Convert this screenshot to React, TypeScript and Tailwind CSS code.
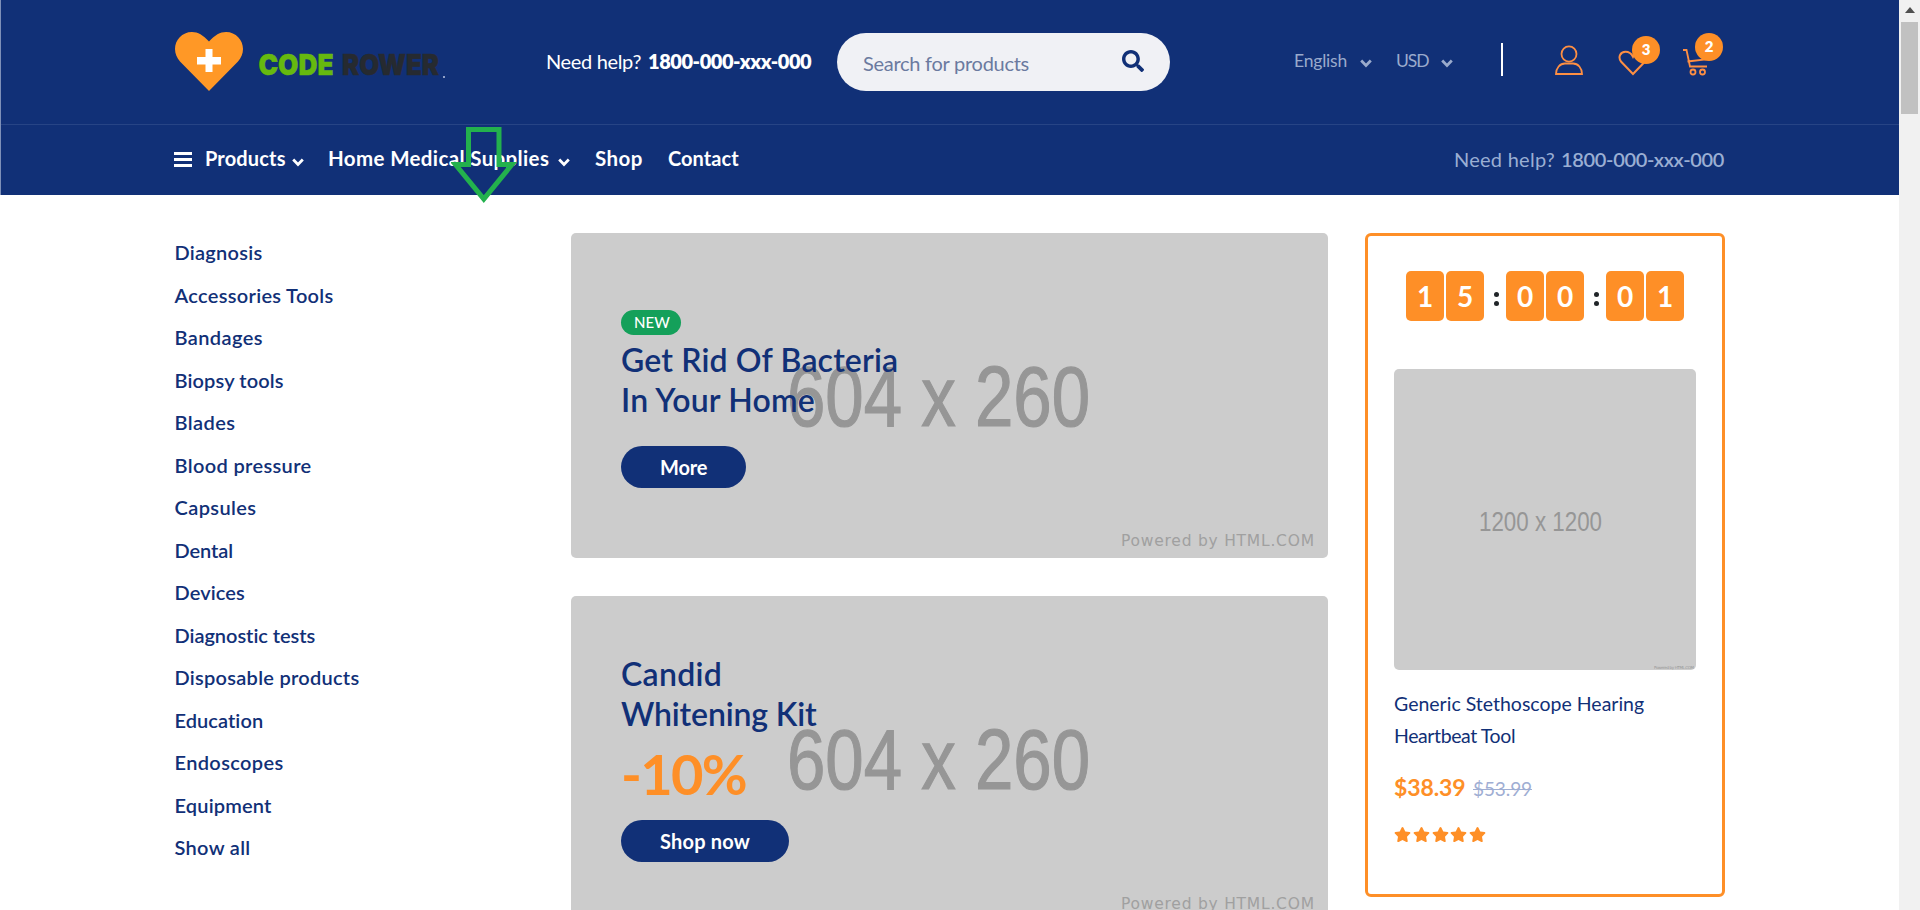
import React from "react";
import { FaSearch, FaStar } from "react-icons/fa";

const CATEGORIES: [string, string][] = [
  ["Diagnosis", "tracking-[0.27px]"],
  ["Accessories Tools", "tracking-[0.31px]"],
  ["Bandages", "tracking-[0.4px]"],
  ["Biopsy tools", "tracking-[0.12px]"],
  ["Blades", "tracking-[0.4px]"],
  ["Blood pressure", "tracking-[0.35px]"],
  ["Capsules", "tracking-[0.4px]"],
  ["Dental", "tracking-[-0.1px]"],
  ["Devices", "tracking-[0.1px]"],
  ["Diagnostic tests", "tracking-[-0.04px]"],
  ["Disposable products", "tracking-[0.27px]"],
  ["Education", "tracking-[0.07px]"],
  ["Endoscopes", "tracking-[0.36px]"],
  ["Equipment", "tracking-[0.17px]"],
  ["Show all", "tracking-[0.32px]"],
];

function Chevron({ className }: { className: string }) {
  return (
    <svg viewBox="0 0 12 9" className={className} fill="none" stroke="currentColor" strokeWidth="2.8">
      <path d="M1.2 1.6 6 6.4l4.8-4.8" />
    </svg>
  );
}

function Logo() {
  return (
    <svg width="275" height="64" viewBox="0 0 275 64" className="mt-[30px] shrink-0">
      <path fill="#ff9826" d="M34 11.5C40 5 45 2 51 2c10 0 17 8 17 17 0 5-2 9-5 12.500L34 61 5 31.500C2 28 0 24 0 19 0 10 7 2 17 2c6 0 11 3 17 9.500z" />
      <path fill="#fff" d="M30.500 19h7v8H46v7.500h-8.500V42h-7v-7.500H22V27h8.500z" />
      <text x="83.500" y="45" fontFamily="Inter" fontWeight="900" fontSize="29" fill="#66b90f" stroke="#66b90f" strokeWidth="0.5" textLength="75" lengthAdjust="spacingAndGlyphs">CODE</text>
      <text x="167" y="45" fontFamily="Inter" fontWeight="900" fontSize="29" fill="#262a30" stroke="#262a30" strokeWidth="0.5" textLength="97" lengthAdjust="spacingAndGlyphs">ROWER</text>
      <path fill="#8fa0c8" d="M268 46h2v2h-2z" />
    </svg>
  );
}

function BannerArt() {
  return (
    <svg viewBox="0 0 757 326" className="col-start-1 row-start-1 h-[326px] w-[757px]">
      <text x="216" y="193" fontFamily="Liberation Sans" fontSize="84.500" fill="#969696" stroke="#969696" strokeWidth="1.2" textLength="303" lengthAdjust="spacingAndGlyphs">604 x 260</text>
      <text x="550" y="312.500" fontFamily="DejaVu Sans" fontSize="15.5" fill="#a0a0a0" textLength="193">Powered by HTML.COM</text>
    </svg>
  );
}

function Digit({ value }: { value: string }) {
  return <span className="h-[50px] w-[38px] rounded-[5px] bg-[#fe8f27] text-center text-[28px] font-bold leading-[50px] text-white">{value}</span>;
}

function Colon() {
  return (
    <span className="flex h-[50px] w-[22px] flex-col items-center gap-1 pl-[2px] pt-[21px]">
      <i className="size-[5px] rounded-full bg-[#212529]" />
      <i className="size-[5px] rounded-full bg-[#212529]" />
    </span>
  );
}

export default function App() {
  return (
    <div className="flex h-[910px] w-[1920px] overflow-hidden bg-white font-[Lato,sans-serif] text-[#113077]">
      <div className="relative w-[1899px]">
        <header className="h-[195px] border-l border-[#7e90b8] bg-[#113077] text-white">
          <div className="flex h-[125px] items-start border-b border-[#274485] pl-[174px]">
            <Logo />
            <p className="mt-[46px] flex w-[290px] whitespace-nowrap pl-[96px] text-[20px] leading-[30px]">
              <span className="w-[102px] shrink-0 tracking-[-0.34px]">Need help?</span>
              <b className="shrink-0 font-extrabold tracking-[-0.45px]">1800-000-xxx-000</b>
            </p>
            <div className="ml-[97px] mt-[33px] flex h-[58px] w-[333px] items-start rounded-full bg-[#f0f1f5] pl-[26px]">
              <span className="mt-[15px] w-[259px] text-[20px] leading-[30px] tracking-[-0.27px] text-[#6b7a9f]">Search for products</span>
              <FaSearch className="mt-[17px] size-[22px] text-[#113077]" />
            </div>
            <div className="ml-[124px] mt-[46px] flex items-start text-[17.500px] leading-[30px] text-[#9aaacc]">
              <span className="w-[66px] tracking-[-0.2px]">English</span>
              <Chevron className="mt-[13px] h-[9px] w-[12px]" />
              <span className="ml-[24px] w-[45px] tracking-[-1px]">USD</span>
              <Chevron className="mt-[13px] h-[9px] w-[12px]" />
            </div>
            <div className="ml-[48px] mt-[43px] h-[33px] w-[2px] bg-white" />
            <svg viewBox="0 0 28 31" className="ml-[52px] mt-[45px] h-[31px] w-[28px]" fill="none" stroke="#fe8f43" strokeWidth="1.8">
              <ellipse cx="14" cy="9" rx="7.500" ry="7.600" />
              <path d="M1 29c0-6 4-10.500 9-10.500h8c5 0 9 4.500 9 10.500z" />
            </svg>
            <div className="relative ml-[35px] mt-[48px] h-[28px] w-[30px]">
              <svg viewBox="0 0 30 28" className="h-[28px] w-[30px]" fill="none" stroke="#fe8f43" strokeWidth="2">
                <path d="M15 26 3.200 13.800C-.5 9 2.500 3.800 7.500 3.800c3.500 0 6 2 7.500 5 1.500-3 4-5 7.500-5 5 0 8 5.200 4.300 10z" />
              </svg>
              <span className="absolute -top-[12px] left-[14px] size-[28px] rounded-full bg-[#fe8f27] text-center text-[15px] font-extrabold leading-[27px]">3</span>
            </div>
            <div className="relative ml-[35px] mt-[48px] h-[28px] w-[30px]">
              <svg viewBox="0 0 30 28" className="h-[28px] w-[30px]" fill="none" stroke="#fe8f43" strokeWidth="1.8">
                <path d="M0 2h3.500l3.500 16.500h17M4.500 13.500l18-2 2-8" />
                <circle cx="10" cy="24" r="2.500" /><circle cx="19.500" cy="24" r="2.500" />
              </svg>
              <span className="absolute -top-[15px] left-[12px] size-[28px] rounded-full bg-[#fe8f27] text-center text-[15px] font-extrabold leading-[27px]">2</span>
            </div>
          </div>
          <nav className="flex items-start whitespace-nowrap pl-[173px] pt-[18px] text-[20px] font-bold leading-[30px]">
            <svg viewBox="0 0 18 15" className="mt-[9px] h-[15px] w-[18px]" fill="currentColor"><path d="M0 0h18v3H0zM0 6h18v3H0zM0 12h18v3H0z" /></svg>
            <span className="ml-[13px] w-[87px] tracking-[0.15px]">Products</span>
            <Chevron className="mt-[15px] h-[9px] w-[12px]" />
            <span className="ml-[24px] w-[230px] text-[20.500px] tracking-[0.36px]">Home Medical Supplies</span>
            <Chevron className="mt-[15px] h-[9px] w-[12px]" />
            <span className="ml-[25px] w-[73px] text-[20.500px] tracking-[0.4px]">Shop</span>
            <span className="w-[71px] tracking-[0.05px]">Contact</span>
            <p className="ml-[715px] flex pt-px font-semibold text-[#9aaed3]">
              <span className="w-[107px] font-normal tracking-[0.26px]">Need help?</span>
              <span className="tracking-[-0.33px]">1800-000-xxx-000</span>
            </p>
          </nav>
          <svg viewBox="0 0 66 76" className="absolute left-[451px] top-[127px] h-[76px] w-[66px]" fill="none" stroke="#23b14d" strokeWidth="5">
            <path d="M17.500 2.500h30.500v35h13L32.800 72 4.500 37.500h13z" />
          </svg>
        </header>
        <main className="flex items-start pl-[174.500px] pt-[36px]">
          <ul className="w-[396.500px] text-[20px] font-semibold leading-[42.500px]">
            {CATEGORIES.map(([name, tracking]) => <li key={name} className={tracking}>{name}</li>)}
          </ul>
          <section className="mt-[2px] grid w-[757px] gap-[38px]">
            <article className="grid h-[325px] overflow-hidden rounded-[5px] bg-[#cccccc]">
              <BannerArt />
              <div className="z-10 col-start-1 row-start-1 flex flex-col items-start pl-[50px] pt-[77px]">
                <span className="h-[25px] w-[60px] rounded-full bg-[#14a05a] pl-[13px] text-[15px] font-medium leading-[25px] text-white">NEW</span>
                <h2 className="mt-[5px] text-[32px] font-semibold leading-[40px]">
                  <span className="tracking-[0.15px]">Get Rid Of Bacteria</span><br />
                  <span className="tracking-[0.19px]">In Your Home</span>
                </h2>
                <button className="mt-[26px] h-[42px] w-[125px] rounded-full bg-[#113077] pl-[39px] text-left text-[20px] font-bold leading-[39px] tracking-[-0.2px] text-white">More</button>
              </div>
            </article>
            <article className="grid h-[325px] overflow-hidden rounded-[5px] bg-[#cccccc]">
              <BannerArt />
              <div className="z-10 col-start-1 row-start-1 flex flex-col items-start pl-[50px] pt-[58px]">
                <h2 className="text-[32px] font-semibold leading-[40px]">
                  <span className="tracking-[0.28px]">Candid</span><br />
                  <span className="tracking-[-0.15px]">Whitening Kit</span>
                </h2>
                <strong className="text-[56px] font-bold leading-[80px] tracking-[-1.700px] text-[#fe8f27]">-10%</strong>
                <button className="mt-[6px] h-[42px] w-[168px] rounded-full bg-[#113077] pl-[39px] text-left text-[20px] font-bold leading-[39px] tracking-[0.19px] text-white">Shop now</button>
              </div>
            </article>
          </section>
          <aside className="ml-[37px] mt-[2px] h-[664px] w-[360px] rounded-[6px] border-[3px] border-[#fe8f27] pl-[26px] pt-[35px]">
            <div className="flex pl-[12px]">
              <div className="flex gap-[2px]"><Digit value="1" /><Digit value="5" /></div>
              <Colon />
              <div className="flex gap-[2px]"><Digit value="0" /><Digit value="0" /></div>
              <Colon />
              <div className="flex gap-[2px]"><Digit value="0" /><Digit value="1" /></div>
            </div>
            <svg viewBox="0 0 302 301" className="mt-[48px] h-[301px] w-[302px] rounded-[5px] bg-[#cccccc]">
              <text x="85" y="161.500" fontFamily="Liberation Sans" fontSize="27" fill="#969696" textLength="123" lengthAdjust="spacingAndGlyphs">1200 x 1200</text>
              <text x="260" y="299.500" fontFamily="DejaVu Sans" fontSize="4" fill="#999999" textLength="40">Powered by HTML.COM</text>
            </svg>
            <p className="mt-[18px] text-[19.500px] leading-[32px]">
              <span>Generic Stethoscope Hearing</span><br />
              <span className="tracking-[-0.4px]">Heartbeat Tool</span>
            </p>
            <p className="mt-[18px] flex items-baseline leading-[34px]">
              <span className="w-[79px] text-[23px] font-bold tracking-[-0.1px] text-[#fe8f27]">$38.39</span>
              <s className="text-[19px] tracking-[-0.1px] text-[#9faed3]">$53.99</s>
            </p>
            <div className="mt-[20px] flex gap-[1.800px] text-[#fe8f27]">
              {[0, 1, 2, 3, 4].map((i) => <FaStar key={i} className="size-[17px]" />)}
            </div>
          </aside>
        </main>
      </div>
      <div className="flex w-[21px] flex-col items-center bg-[#f1f1f1]">
        <svg viewBox="0 0 10 6" className="mt-[7px] h-[6px] w-[10px]"><path fill="#505050" d="M0 6 5 0l5 6z" /></svg>
        <div className="mt-[9px] h-[92px] w-[17px] bg-[#c1c1c1]" />
      </div>
    </div>
  );
}
